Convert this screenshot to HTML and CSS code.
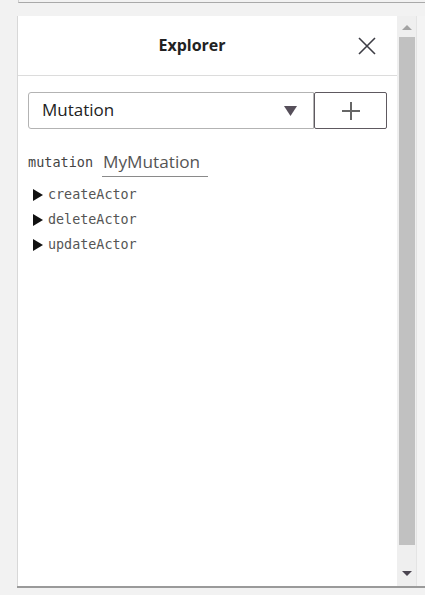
FILE: index.html
```html
<!DOCTYPE html>
<html>
<head>
<meta charset="utf-8">
<link rel="stylesheet" href="styles.css">
</head>
<body>
<div class="topbox"></div>
<div class="frame">
  <div class="panel">
    <div class="header">
      <div class="title">Explorer</div>
      <svg class="close" width="18" height="18" viewBox="0 0 18 18"><path d="M1 1L17 17M17 1L1 17" stroke="#3d3d45" stroke-width="1.6" fill="none"/></svg>
    </div>
    <div class="body">
      <div class="controls">
        <div class="select"><span>Mutation</span><svg class="caret" width="13" height="10" viewBox="0 0 13 10"><path d="M0 0H13L6.5 10Z" fill="#564f5a"/></svg></div>
        <div class="add"><svg width="18" height="18" viewBox="0 0 18 18"><path d="M9 0V18M0 9H18" stroke="#666" stroke-width="2"/></svg></div>
      </div>
      <div class="oprow">
        <span class="kw">mutation</span>
        <span class="opname">MyMutation</span>
      </div>
      <div class="tree">
        <div class="item"><span class="tri"></span>createActor</div>
        <div class="item"><span class="tri"></span>deleteActor</div>
        <div class="item"><span class="tri"></span>updateActor</div>
      </div>
    </div>
  </div>
  <div class="scroll">
    <div class="arrow up"></div>
    <div class="thumb"></div>
    <div class="arrow down"></div>
  </div>
  <div class="edge"></div>
</div>
</body>
</html>
```

FILE: styles.css
```css
html, body {
  margin: 0;
  padding: 0;
  background: #f2f2f2;
  width: 425px;
  height: 595px;
  overflow: hidden;
  font-family: "Open Sans", "Noto Sans", sans-serif;
}
.topbox {
  margin-left: 18px;
  height: 2px;
  border-left: 1px solid #d0d0d0;
  border-bottom: 1px solid #a9a9a9;
  background: #f2f2f2;
}
.frame {
  display: flex;
  margin-top: 13px;
  margin-left: 17px;
  height: 570px;
  border-bottom: 2px solid #9a9a9a;
  width: 408px;
}
.panel {
  width: 379px;
  background: #fff;
  border-left: 1px solid #d8d8d8;
  display: flex;
  flex-direction: column;
}
.header {
  height: 59px;
  display: flex;
  align-items: center;
  border-bottom: 1px solid #dcdcdc;
  padding-right: 21px;
}
.title {
  flex: 1;
  text-align: center;
  padding-left: 8px;
  font-weight: 700;
  font-size: 16px;
  color: #222;
  margin-top: -2px;
}
.close {
  display: block;
}
.body {
  padding: 16px 10px 0 10px;
}
.controls {
  display: flex;
  height: 37px;
}
.select {
  flex: 1;
  border: 1px solid #b3b3b3;
  border-radius: 3px 0 0 3px;
  display: flex;
  align-items: center;
  justify-content: space-between;
  padding: 0 16px 0 13px;
  font-size: 17px;
  color: #222;
}
.select span { margin-top: -2px; }
.caret { display: block; margin-top: 1px; }
.add {
  width: 71px;
  border: 1px solid #5e5960;
  border-radius: 2px;
  display: flex;
  align-items: center;
  justify-content: center;
}
.add svg { display: block; }
.oprow {
  display: flex;
  align-items: center;
  margin-top: 19px;
  height: 30px;
}
.kw {
  font-family: "DejaVu Sans Mono", monospace;
  font-size: 13.5px;
  color: #444;
  margin-right: 9px;
  margin-top: -2px;
}
.opname {
  font-size: 17.2px;
  color: #555;
  padding: 0 8px 2px 1px;
  border-bottom: 1px solid #8a8a8a;
  line-height: 24px;
}
.tree {
  margin-top: 4px;
}
.item {
  display: flex;
  align-items: center;
  height: 25px;
  font-family: "DejaVu Sans Mono", monospace;
  font-size: 13.4px;
  color: #555;
  padding-left: 5px;
}
.tri {
  width: 0;
  height: 0;
  border-top: 6px solid transparent;
  border-bottom: 6px solid transparent;
  border-left: 10px solid #111;
  margin-right: 5px;
}
.scroll {
  width: 19px;
  background: #efefef;
  display: flex;
  flex-direction: column;
  align-items: center;
}
.arrow {
  width: 0;
  height: 0;
  border-left: 5px solid transparent;
  border-right: 5px solid transparent;
}
.arrow.up {
  border-bottom: 5px solid #a3a3a3;
  margin-top: 9px;
  margin-bottom: 7px;
}
.thumb {
  width: 16px;
  height: 508px;
  background: #c1c1c1;
}
.arrow.down {
  border-top: 5px solid #4b4550;
  margin-top: 26px;
}
.edge {
  width: 8px;
  border-left: 1px solid #e4e4e4;
  background: #f4f4f4;
}
```
